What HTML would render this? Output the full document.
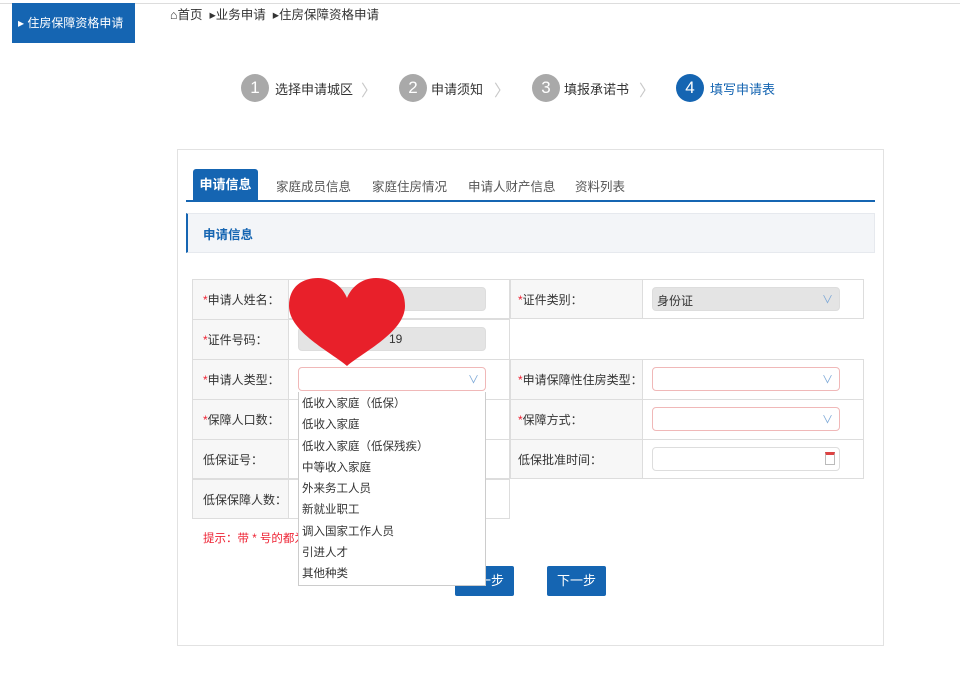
<!DOCTYPE html>
<html><head><meta charset="utf-8"><style>
*{margin:0;padding:0;box-sizing:border-box}
body{width:960px;height:673px;background:#fff;position:relative;overflow:hidden;font-family:"Liberation Sans","Noto Sans CJK SC",sans-serif;font-size:12px;color:#333}
.a{position:absolute}
.circ{position:absolute;width:28px;height:28px;border-radius:50%;background:#a9a9a9;color:#fff;font-size:17px;text-align:center;line-height:28px}
.st{position:absolute;font-size:13px;color:#333}
.chev{position:absolute;color:#c8c8c8;font-size:16px}
.lab{position:absolute;font-size:12px;color:#333}
.lab b{color:#e23;font-weight:normal}
.inp{position:absolute;height:24px;border-radius:4px;background:#e4e4e4;border:1px solid #ddd}
.sel{position:absolute;height:24px;border-radius:4px;background:#fff;border:1px solid #f0b8b8}
.arr{position:absolute;right:6px;top:3px;color:#7aa6d6;font-size:11px}
.dd div{height:21.3px;line-height:21px;padding-left:3px;font-size:11.5px;color:#333}
.btn{position:absolute;background:#1565b2;color:#fff;font-size:13px;text-align:center;line-height:30px;border-radius:2px;height:30px;width:59px}
</style></head><body>
<div class="a" style="left:0;top:3px;width:960px;height:1px;background:#ddd"></div>
<div class="a" style="left:12px;top:3px;width:123px;height:40px;background:#1565b2;color:#fff;font-size:12px;line-height:40px;padding-left:6px;white-space:nowrap">▸ 住房保障资格申请</div>
<div class="a" style="left:170px;top:4px;font-size:12.5px;color:#333">⌂首页 &nbsp;▸业务申请 &nbsp;▸住房保障资格申请</div>

<div class="circ" style="left:241px;top:74px">1</div><div class="st" style="left:275px;top:79px">选择申请城区</div><div class="chev" style="left:361px;top:77px">〉</div>
<div class="circ" style="left:399px;top:74px">2</div><div class="st" style="left:431px;top:79px">申请须知</div><div class="chev" style="left:494px;top:77px">〉</div>
<div class="circ" style="left:532px;top:74px">3</div><div class="st" style="left:564px;top:79px">填报承诺书</div><div class="chev" style="left:639px;top:77px">〉</div>
<div class="circ" style="left:676px;top:74px;background:#1565b2">4</div><div class="st" style="left:710px;top:79px;color:#1565b2">填写申请表</div>

<div class="a" style="left:177px;top:149px;width:707px;height:497px;border:1px solid #e2e2e2"></div>
<div class="a" style="left:193px;top:169px;width:65px;height:32px;background:#1565b2;border-radius:3px 3px 0 0;color:#fff;font-weight:bold;font-size:13px;text-align:center;line-height:32px">申请信息</div>
<div class="a" style="left:276px;top:176px;font-size:12.5px;color:#555">家庭成员信息</div>
<div class="a" style="left:372px;top:176px;font-size:12.5px;color:#555">家庭住房情况</div>
<div class="a" style="left:468px;top:176px;font-size:12.5px;color:#555">申请人财产信息</div>
<div class="a" style="left:575px;top:176px;font-size:12.5px;color:#555">资料列表</div>
<div class="a" style="left:186px;top:200px;width:689px;height:2px;background:#1565b2"></div>

<div class="a" style="left:186px;top:213px;width:689px;height:40px;background:#f3f5f8;border:1px solid #e6e9ee;border-left:2px solid #1565b2"></div>
<div class="a" style="left:203px;top:224px;font-size:12.5px;color:#1565b2;font-weight:bold">申请信息</div>

<div class="a" style="left:192px;top:279px;width:672px;height:40px;border:1px solid #ddd"></div>
<div class="a" style="left:192px;top:279px;width:97px;height:240px;background:#f7f7f7;border:1px solid #ddd"></div>
<div class="a" style="left:289px;top:279px;width:221px;height:240px;border:1px solid #ddd;border-left:none"></div>
<div class="a" style="left:510px;top:279px;width:133px;height:40px;background:#f7f7f7;border:1px solid #ddd"></div>
<div class="a" style="left:192px;top:359px;width:672px;height:120px;border:1px solid #ddd"></div>
<div class="a" style="left:510px;top:359px;width:133px;height:120px;background:#f7f7f7;border:1px solid #ddd"></div>
<div class="a" style="left:192px;top:319px;width:318px;height:1px;background:#ddd"></div>
<div class="a" style="left:192px;top:399px;width:672px;height:1px;background:#ddd"></div>
<div class="a" style="left:192px;top:439px;width:672px;height:1px;background:#ddd"></div>
<div class="a" style="left:192px;top:479px;width:318px;height:1px;background:#ddd"></div>

<div class="lab" style="left:203px;top:291px"><b>*</b>申请人姓名：</div>
<div class="lab" style="left:203px;top:331px"><b>*</b>证件号码：</div>
<div class="lab" style="left:203px;top:371px"><b>*</b>申请人类型：</div>
<div class="lab" style="left:203px;top:411px"><b>*</b>保障人口数：</div>
<div class="lab" style="left:203px;top:451px">低保证号：</div>
<div class="lab" style="left:203px;top:491px">低保保障人数：</div>
<div class="lab" style="left:518px;top:291px"><b>*</b>证件类别：</div>
<div class="lab" style="left:518px;top:371px"><b>*</b>申请保障性住房类型：</div>
<div class="lab" style="left:518px;top:411px"><b>*</b>保障方式：</div>
<div class="lab" style="left:518px;top:451px">低保批准时间：</div>

<div class="inp" style="left:298px;top:287px;width:188px"></div>
<div class="inp" style="left:298px;top:327px;width:188px;padding:4px 0 0 90px;font-size:12px">19</div>
<div class="sel" style="left:298px;top:367px;width:188px"><span class="arr">∨</span></div>
<div class="sel" style="left:298px;top:407px;width:188px"></div>
<div class="a" style="left:298px;top:487px;width:188px;height:24px;border:1px solid #ddd;border-radius:4px"></div>
<div class="inp" style="left:652px;top:287px;width:188px;padding:4px 0 0 4px">身份证<span class="arr">∨</span></div>
<div class="sel" style="left:652px;top:367px;width:188px"><span class="arr">∨</span></div>
<div class="sel" style="left:652px;top:407px;width:188px"><span class="arr">∨</span></div>
<div class="a" style="left:652px;top:447px;width:188px;height:24px;border:1px solid #ddd;border-radius:4px"><span style="position:absolute;right:4px;top:4px;width:10px;height:13px;border:1px solid #bbb;border-top:3px solid #d44"></span></div>

<div class="a" style="left:203px;top:530px;color:#e23;font-size:11.5px">提示：带 * 号的都为必填项</div>
<div class="btn" style="left:455px;top:566px">上一步</div>
<div class="btn" style="left:547px;top:566px">下一步</div>

<div class="a dd" style="left:298px;top:392px;width:188px;height:194px;background:#fff;border:1px solid #ccc;border-top:none;padding-top:2px">
<div>低收入家庭（低保）</div><div>低收入家庭</div><div>低收入家庭（低保残疾）</div><div>中等收入家庭</div><div>外来务工人员</div><div>新就业职工</div><div>调入国家工作人员</div><div>引进人才</div><div>其他种类</div>
</div>

<svg class="a" style="left:287px;top:276px" width="120" height="92" viewBox="0 0 120 92"><path d="M60 90 C44 76 2 56 2 30 C2 10 16 2 31 2 C46 2 56 12 60 22 C64 12 74 2 89 2 C104 2 118 10 118 30 C118 56 76 76 60 90Z" fill="#e8202a"/></svg>
</body></html>
